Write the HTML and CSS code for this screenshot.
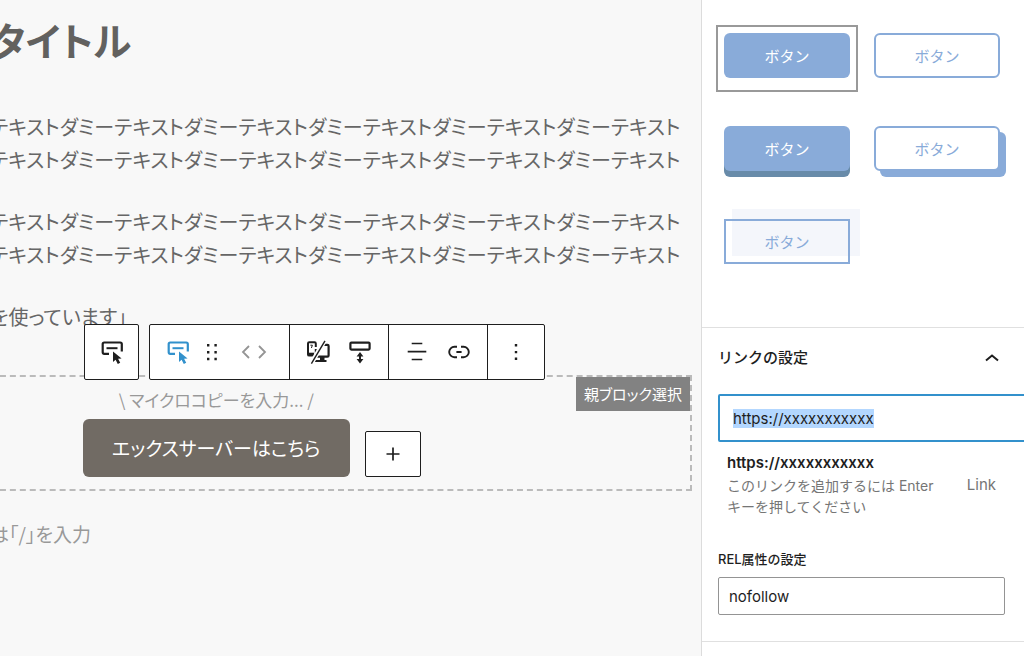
FILE: index.html
```html
<!DOCTYPE html>
<html lang="ja">
<head>
    <meta charset="UTF-8">
    <meta name="viewport" content="width=device-width, initial-scale=1.0">
    <title>投稿を編集</title>
    <link rel="stylesheet" href="styles.css">
</head>
<body>
    <div class="layout">
        <main class="editor">
            <div class="canvas">
                <h1 class="post-title">タイトル</h1>
                <p>テキストダミーテキストダミーテキストダミーテキストダミーテキストダミーテキスト<br>テキストダミーテキストダミーテキストダミーテキストダミーテキストダミーテキスト</p>
                <p>テキストダミーテキストダミーテキストダミーテキストダミーテキストダミーテキスト<br>テキストダミーテキストダミーテキストダミーテキストダミーテキストダミーテキスト</p>
                <p>を使っています」</p>

                <div class="block">
                    <button type="button" class="parent-select">親ブロック選択</button>

                    <div class="toolbar">
                        <button type="button" class="toolbar-parent" aria-label="親ブロック">
                            <svg width="24" height="24" viewBox="0 0 24 24"><path d="M9 13.8H4.2Q2.7 13.8 2.7 12.3V4Q2.7 2.5 4.2 2.5H20.3Q21.8 2.5 21.8 4V11.5" fill="none" stroke="currentColor" stroke-width="2.2"/><path d="M6.5 8.2H17.5" stroke="currentColor" stroke-width="2"/><path d="M13 11.5V22L15.6 19.8L17.8 24L20.2 22.8L18.1 18.8L21.6 18.5Z" fill="currentColor"/></svg>
                        </button>
                        <div class="toolbar-main">
                            <div class="toolbar-group">
                                <button type="button" class="tool active" aria-label="ボタン">
                                    <svg width="24" height="24" viewBox="0 0 24 24"><path d="M9 13.8H4.2Q2.7 13.8 2.7 12.3V4Q2.7 2.5 4.2 2.5H20.3Q21.8 2.5 21.8 4V11.5" fill="none" stroke="currentColor" stroke-width="2.2"/><path d="M6.5 8.2H17.5" stroke="currentColor" stroke-width="2"/><path d="M13 11.5V22L15.6 19.8L17.8 24L20.2 22.8L18.1 18.8L21.6 18.5Z" fill="currentColor"/></svg>
                                </button>
                                <button type="button" class="tool tool-drag" aria-label="ドラッグ">
                                    <svg width="24" height="24" viewBox="0 0 24 24" fill="currentColor"><path d="M7 4h2.4v2.4H7zM14.4 4h2.4v2.4h-2.4zM7 11h2.4v2.4H7zM14.4 11h2.4v2.4h-2.4zM7 17.8h2.4v2.4H7zM14.4 17.8h2.4v2.4h-2.4z"/></svg>
                                </button>
                                <div class="movers">
                                    <button type="button" class="mover" aria-label="左に移動">
                                        <svg width="16" height="24" viewBox="0 0 16 24"><path d="M11 6L5 12L11 18" fill="none" stroke="currentColor" stroke-width="1.8"/></svg>
                                    </button>
                                    <button type="button" class="mover" aria-label="右に移動">
                                        <svg width="16" height="24" viewBox="0 0 16 24"><path d="M5 6L11 12L5 18" fill="none" stroke="currentColor" stroke-width="1.8"/></svg>
                                    </button>
                                </div>
                            </div>
                            <div class="toolbar-group">
                                <button type="button" class="tool" aria-label="表示デバイス">
                                    <svg width="24" height="24" viewBox="0 0 24 24" fill="none" stroke="currentColor"><path d="M9.8 7V3.4Q9.8 2.2 8.6 2.2H3.2Q2 2.2 2 3.4V14.4Q2 15.6 3.2 15.6H9.8V9" stroke-width="2"/><path d="M2 13.9H8" stroke-width="2.4"/><path d="M4.4 5.2H6.4L5.4 8" stroke-width="1"/><path d="M15 4.8H21.4Q22.6 4.8 22.6 6V15.4Q22.6 16.6 21.4 16.6H10" stroke-width="2.2"/><path d="M14 17H18.500V20.500H14Z" fill="currentColor" stroke="none"/><path d="M9 21H20.500" stroke-width="2"/><path d="M19 0L5 24" stroke="#fff" stroke-width="4.6"/><path d="M19 .8L5.4 23.6" stroke-width="1.4"/></svg>
                                </button>
                                <button type="button" class="tool" aria-label="余白">
                                    <svg width="24" height="24" viewBox="0 0 24 24" fill="none" stroke="currentColor"><rect x="2.4" y="2.6" width="19.2" height="7" rx="1" stroke-width="2.2"/><path d="M12 14V21" stroke-width="2"/><path d="M8.6 16.4L12 12L15.4 16.400ZM8.6 19L12 23.4L15.4 19Z" fill="currentColor" stroke="none"/></svg>
                                </button>
                            </div>
                            <div class="toolbar-group">
                                <button type="button" class="tool" aria-label="配置">
                                    <svg width="24" height="24" viewBox="0 0 24 24" fill="none" stroke="currentColor" stroke-width="1.7"><path d="M6.7 3.5H17.3M2.7 11.6H21.3M6.7 19.5H17.3"/></svg>
                                </button>
                                <button type="button" class="tool" aria-label="リンク">
                                    <svg width="24" height="24" viewBox="0 0 24 24" fill="none" stroke="currentColor" stroke-width="1.9"><path d="M10 6.8H7.4A5.2 5.2 0 0 0 7.4 17.200H10M14 6.8H16.6A5.2 5.2 0 0 1 16.6 17.200H14M9.4 12H14.6"/></svg>
                                </button>
                            </div>
                            <div class="toolbar-group">
                                <button type="button" class="tool" aria-label="オプション">
                                    <svg width="24" height="24" viewBox="0 0 24 24" fill="currentColor"><path d="M10.8 4h2.4v2.4h-2.4zM10.8 10.9h2.4v2.4h-2.4zM10.8 17.6h2.4v2.4h-2.4z"/></svg>
                                </button>
                            </div>
                        </div>
                    </div>

                    <div class="block-row">
                        <div class="cta">
                            <span class="micro-copy">\ マイクロコピーを入力... /</span>
                            <a class="cta-button" href="#">エックスサーバーはこちら</a>
                        </div>
                        <button type="button" class="add-block" aria-label="ブロックを追加">
                            <svg width="24" height="24" viewBox="0 0 24 24"><path d="M12 5.5V18.5M5.5 12H18.5" stroke="currentColor" stroke-width="1.7"/></svg>
                        </button>
                    </div>
                </div>

                <p class="placeholder">は「/」を入力</p>
            </div>
        </main>

        <aside class="sidebar">
            <section class="panel styles-panel">
                <div class="preset selected"><button type="button" class="preset-button fill">ボタン</button></div>
                <div class="preset"><button type="button" class="preset-button line">ボタン</button></div>
                <div class="preset"><button type="button" class="preset-button fill solid">ボタン</button></div>
                <div class="preset"><button type="button" class="preset-button line offset">ボタン</button></div>
                <div class="preset"><button type="button" class="preset-button line shifted">ボタン</button></div>
            </section>

            <section class="panel link-panel">
                <button type="button" class="panel-header">
                    リンクの設定
                    <svg width="24" height="24" viewBox="0 0 24 24"><path d="M6 14.500L12 9.500L18 14.500" fill="none" stroke="currentColor" stroke-width="2"/></svg>
                </button>
                <input type="text" class="url-input" id="url" value="https://xxxxxxxxxxx" aria-label="URL">
                <button type="button" class="suggestion">
                    <span class="suggestion-text">
                        <strong>https://xxxxxxxxxxx</strong>
                        <span>このリンクを追加するには Enter キーを押してください</span>
                    </span>
                    <span class="suggestion-type">Link</span>
                </button>
                <label class="rel-label" for="rel">REL属性の設定</label>
                <input type="text" class="rel-input" id="rel" value="nofollow">
            </section>
        </aside>
    </div>

    <script>
        const url = document.getElementById('url');
        url.focus({ preventScroll: true });
        url.select();
    </script>
</body>
</html>
```
FILE: styles.css
```css
* {
    box-sizing: border-box;
}

body {
    margin: 0;
    font-family: Inter, 'Noto Sans CJK JP', sans-serif;
    font-size: 15px;
    color: #1e1e1e;
    background-color: #fff;
}

button {
    padding: 0;
    border: none;
    background: none;
    color: inherit;
    font: inherit;
    cursor: pointer;
}

svg {
    display: block;
}

.layout {
    display: flex;
    min-height: 100vh;
}

/* Editor */
.editor {
    flex: 1;
    min-width: 0;
    overflow: clip;
    background-color: #f8f8f8;
    font-family: 'Noto Sans CJK JP', sans-serif;
    font-feature-settings: "palt";
    color: #666;
}

/* scrolled a little to the left */
.canvas {
    margin-left: -10px;
    padding-right: 9px;
}

.post-title {
    margin: 0 0 46px;
    padding-top: 14px;
    font-size: 39px;
    line-height: 50px;
    color: #62615f;
}

.canvas p {
    margin: 0 0 29px;
    font-size: 20px;
    line-height: 33px;
    white-space: nowrap;
}

.block {
    position: relative;
    margin-top: 42px;
    padding: 11px 0 12px 93px;
    border: 2px dashed #bbb;
    border-left: none;
}

.parent-select {
    position: absolute;
    top: 0;
    right: 0;
    padding: 0 8px;
    font-size: 15px;
    line-height: 34px;
    color: #fff;
    background-color: #828282;
}

.block-row {
    display: flex;
    align-items: flex-end;
    gap: 15px;
}

.cta {
    display: flex;
    flex-direction: column;
}

.micro-copy {
    margin-bottom: 7px;
    font-size: 17px;
    line-height: 24px;
    text-align: center;
    color: #999;
}

.cta-button {
    padding: 0 29px;
    border-radius: 6px;
    font-size: 19px;
    line-height: 58px;
    color: #fff;
    text-decoration: none;
    background-color: #716b64;
}

.add-block {
    display: flex;
    align-items: center;
    justify-content: center;
    width: 56px;
    height: 46px;
    border: 1px solid #1e1e1e;
    border-radius: 2px;
    color: #1e1e1e;
    background-color: #fff;
}

.canvas .placeholder {
    margin-top: 26px;
    font-size: 19px;
    color: #999;
}

/* Toolbar */
.toolbar {
    position: absolute;
    left: 94px;
    bottom: 109px;
    display: flex;
    gap: 10px;
    height: 56px;
    color: #1e1e1e;
}

.toolbar-parent, .toolbar-main {
    display: flex;
    border: 1px solid #1e1e1e;
    border-radius: 2px;
    background-color: #fff;
}

.toolbar-parent {
    align-items: center;
    justify-content: center;
    width: 55px;
}

.toolbar-group {
    display: flex;
    padding: 0 7px;
    border-right: 1px solid #1e1e1e;
}

.toolbar-group:last-child {
    border-right: none;
}

.tool, .mover {
    display: flex;
    align-items: center;
    justify-content: center;
    width: 42px;
}

.tool-drag {
    width: 26px;
}

.movers {
    display: flex;
    justify-content: center;
    width: 57px;
    color: #949494;
}

.mover {
    width: 16px;
}

.active {
    color: #3291cc;
}

/* Sidebar */
.sidebar {
    flex: 0 0 323px;
    overflow: clip;
    border-left: 1px solid #dcdcdc;
}

.panel {
    border-bottom: 1px solid #e0e0e0;
}

.styles-panel {
    display: grid;
    grid-template-columns: 1fr 1fr;
    gap: 26px 8px;
    padding: 25px 16px 49px 14px;
}

.preset {
    height: 67px;
    padding: 6px;
    border: 2px solid transparent;
}

.selected {
    border-color: #999;
}

.preset-button {
    width: 100%;
    height: 45px;
    border-radius: 6px;
}

.fill {
    color: #fff;
    background-color: #89abd9;
}

.line {
    border: 2px solid #89abd9;
    color: #89abd9;
    background-color: #fff;
}

.solid {
    box-shadow: 0 6px #688ba9;
}

.offset {
    box-shadow: 6px 6px #89abd9;
}

.shifted {
    position: relative;
    border-radius: 0;
    background: none;
}

.shifted::before {
    content: "";
    position: absolute;
    z-index: -1;
    inset: -12px -12px 6px 6px;
    background-color: #f4f6fb;
}

.link-panel {
    padding: 0 19px 26px 16px;
}

.panel-header {
    display: flex;
    align-items: center;
    justify-content: space-between;
    width: 100%;
    padding: 18px 1px 24px 0;
    font-weight: 500;
    line-height: 24px;
}

/* runs past the right edge of the sidebar */
.url-input {
    display: block;
    width: calc(100% + 24px);
    height: 48px;
    padding: 0 13px;
    border: 2px solid #3291cc;
    border-radius: 2px;
    outline: none;
    font: inherit;
    color: inherit;
}

.url-input::selection {
    color: #1e1e1e;
    background-color: #b3d7ff;
}

.suggestion {
    display: flex;
    justify-content: space-between;
    align-items: center;
    width: 100%;
    padding: 9px 9px 0 9px;
    text-align: left;
    line-height: 21px;
    color: #757575;
}

.suggestion-text {
    width: 212px;
    font-size: 14px;
}

.suggestion-text strong {
    display: block;
    font-size: 15px;
    font-weight: 600;
    line-height: 24px;
    color: #1e1e1e;
}

.rel-label {
    display: block;
    margin-top: 33px;
    font-size: 13px;
    font-weight: 500;
    line-height: 18px;
}

.rel-input {
    display: block;
    width: 100%;
    height: 38px;
    margin-top: 9px;
    padding: 0 10px;
    border: 1px solid #949494;
    border-radius: 2px;
    font: inherit;
    color: inherit;
}
```
